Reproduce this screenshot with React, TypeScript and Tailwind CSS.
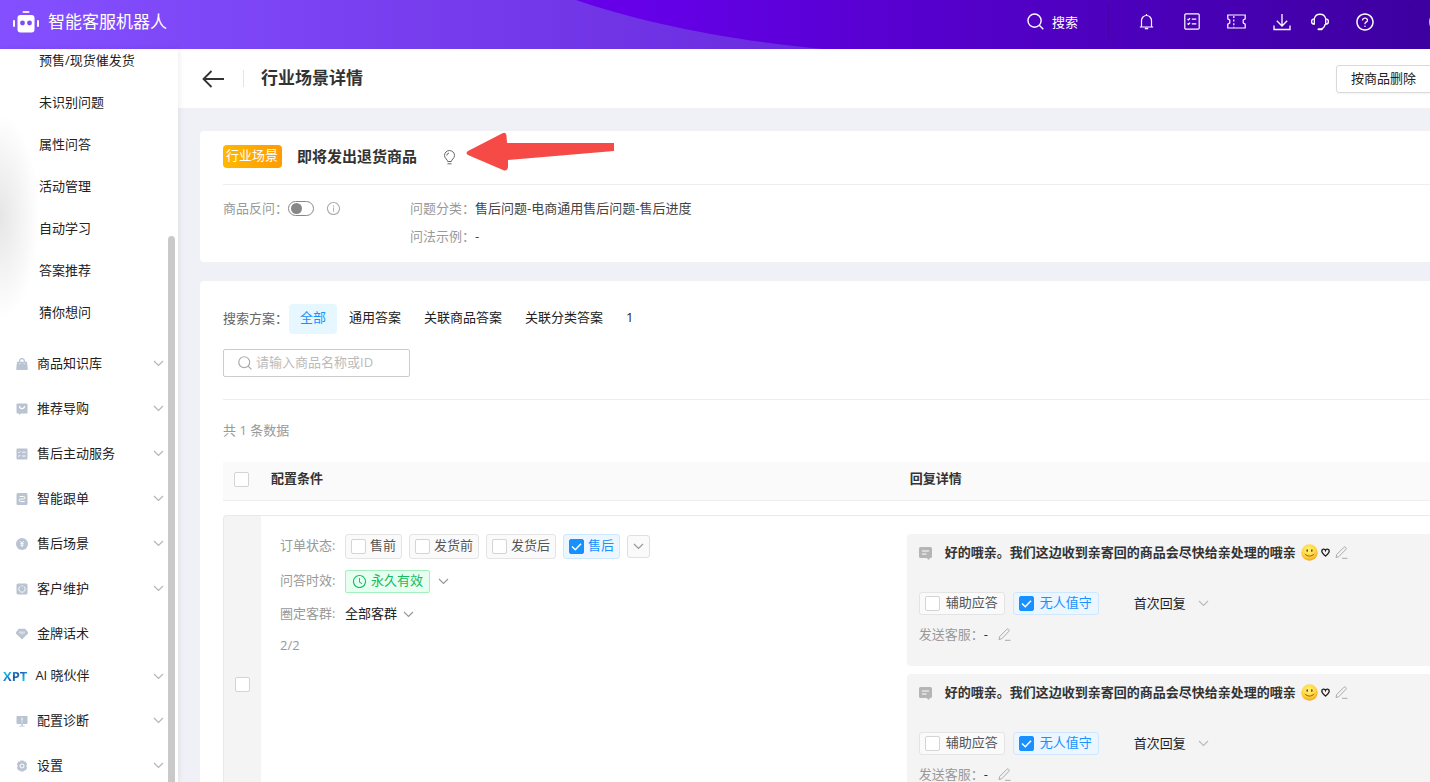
import { useState } from 'react';
import type { ReactNode } from 'react';
import clsx from 'clsx';
import {
  AiOutlineClockCircle,
  AiOutlineInfoCircle,
  AiOutlineQuestionCircle,
} from 'react-icons/ai';

const subMenu = [
  '预售/现货催发货',
  '未识别问题',
  '属性问答',
  '活动管理',
  '自动学习',
  '答案推荐',
  '猜你想问',
];

const tabs = ['全部', '通用答案', '关联商品答案', '关联分类答案', '1'];

function Down({ className = 'text-[#999]' }: { className?: string }) {
  return (
    <svg width="11" height="7" viewBox="0 0 11 7" fill="none" stroke="currentColor" strokeWidth="1.2" className={className}>
      <path d="M1 1l4.5 4.5L10 1" />
    </svg>
  );
}

function Search({ size, className }: { size: number; className?: string }) {
  return (
    <svg width={size} height={size} viewBox="0 0 18 18" fill="none" stroke="currentColor" strokeWidth="1.5" className={className}>
      <circle cx="8" cy="8" r="7" />
      <path d="M13 13l4.300 4.300" />
    </svg>
  );
}

function Pencil() {
  return (
    <svg width="13" height="13" viewBox="0 0 13 13" fill="none" stroke="currentColor" strokeWidth="1">
      <path d="M1 11.500l.7-3L9 1.200a1 1 0 0 1 1.400 0l.6.6a1 1 0 0 1 0 1.400L3.800 10.700zM7 12.300h5.500" />
    </svg>
  );
}

function MenuIcon({ children }: { children: ReactNode }) {
  return (
    <svg width="12" height="12" viewBox="0 0 12 12" fill="#b9c3d2" stroke="none" className="shrink-0">
      {children}
    </svg>
  );
}

const menu = [
  {
    label: '商品知识库',
    open: true,
    icon: (
      <MenuIcon>
        <path d="M3.6 4V3a2.4 2.4 0 0 1 4.8 0v1" fill="none" stroke="#b9c3d2" strokeWidth="1.3" />
        <path d="M1 3.8h10l.8 7.2a1 1 0 0 1-1 1H1.200a1 1 0 0 1-1-1z" />
        <path d="M3.8 5v1.200M8.200 5v1.200" stroke="#fff" strokeWidth=".9" />
      </MenuIcon>
    ),
  },
  {
    label: '推荐导购',
    open: true,
    icon: (
      <MenuIcon>
        <path d="M1.500 .5h9a1 1 0 0 1 1 1v8a1 1 0 0 1-1 1H5L3 12v-1.500H1.500a1 1 0 0 1-1-1v-8a1 1 0 0 1 1-1z" />
        <path d="M3.500 3c0 3.400 5 3.400 5 0" fill="none" stroke="#fff" strokeWidth="1.200" />
      </MenuIcon>
    ),
  },
  {
    label: '售后主动服务',
    open: true,
    icon: (
      <MenuIcon>
        <rect x=".5" y=".5" width="11" height="11" rx="1" />
        <path d="M2.200 4.200l.8.7 1.300-1.500M2.200 7.800l.8.7 1.300-1.500M6 4.200h3.800M6 8h3.800" fill="none" stroke="#fff" strokeWidth=".9" />
      </MenuIcon>
    ),
  },
  {
    label: '智能跟单',
    open: true,
    icon: (
      <MenuIcon>
        <rect x=".5" y="0" width="11" height="12" rx="1.500" />
        <path d="M3.500 3.500h4.200a1.200 1.200 0 0 1 0 2.500H4.500a1.200 1.200 0 0 0 0 2.600H8.800" fill="none" stroke="#fff" strokeWidth="1" />
      </MenuIcon>
    ),
  },
  {
    label: '售后场景',
    open: true,
    icon: (
      <MenuIcon>
        <circle cx="6" cy="6" r="6" />
        <path d="M4.300 3.200L6 5.300l1.700-2.100M6 5.300V9M4.400 5.600h3.200M4.400 7.200h3.200" fill="none" stroke="#fff" strokeWidth=".9" />
      </MenuIcon>
    ),
  },
  {
    label: '客户维护',
    open: true,
    icon: (
      <MenuIcon>
        <rect x=".5" y=".5" width="11" height="11" rx="1.500" />
        <path d="M4.300 3.300a3.200 3.200 0 1 0 3.400 0M6 2.300v1.400" fill="none" stroke="#fff" strokeWidth=".9" />
      </MenuIcon>
    ),
  },
  {
    label: '金牌话术',
    open: false,
    icon: (
      <MenuIcon>
        <path d="M2.800.8h6.400L12 4.200v1.200L6 11.600 0 5.400V4.200z" />
        <path d="M4 3.500v2M6 3.500v3M8 3.500v2" stroke="#fff" strokeWidth=".9" />
      </MenuIcon>
    ),
  },
  { label: 'AI 晓伙伴', open: true, icon: null },
  {
    label: '配置诊断',
    open: true,
    icon: (
      <MenuIcon>
        <path d="M1.300 1h9.400a.8.8 0 0 1 .8.8v6.400a.8.8 0 0 1-.8.8H1.300a.8.8 0 0 1-.8-.8V1.800a.8.8 0 0 1 .8-.8zM5.300 9h1.400v1.800H5.300zM3.300 10.700h5.400v.9H3.300z" />
        <path d="M6 2.600v3M6 6.500v1.100" stroke="#fff" strokeWidth="1" />
      </MenuIcon>
    ),
  },
  {
    label: '设置',
    open: true,
    icon: (
      <MenuIcon>
        <path d="M4.600.4h2.800l.7 1.200 1.400-.1 1.600 2.400-.6 1.300v1.600l.6 1.300-1.600 2.400-1.400-.1-.7 1.200H4.600l-.7-1.200-1.400.1L.9 8.100l.6-1.300V5.200L.9 3.900l1.600-2.400 1.400.1z" />
        <circle cx="6" cy="6" r="2" fill="none" stroke="#fff" strokeWidth="1" />
      </MenuIcon>
    ),
  },
];

function Check({ checked = false, label }: { checked?: boolean; label?: string }) {
  const [on, setOn] = useState(checked);
  return (
    <span className="grid size-[15px] shrink-0">
      <input
        type="checkbox"
        aria-label={label}
        checked={on}
        onChange={() => setOn(!on)}
        className="col-start-1 row-start-1 size-[15px] appearance-none rounded-[2px] border border-[#d4d4d4] bg-white checked:border-[#1890ff] checked:bg-[#1890ff]"
      />
      {on && (
        <svg viewBox="0 0 15 15" fill="none" stroke="#fff" strokeWidth="1.500" className="pointer-events-none col-start-1 row-start-1 size-[15px]">
          <path d="M3 7.500l3.300 3.300L12 4.800" />
        </svg>
      )}
    </span>
  );
}

function CheckChip({ text, checked = false, className }: { text: string; checked?: boolean; className: string }) {
  return (
    <label
      className={clsx(
        'flex items-center rounded-[3px] border',
        checked ? 'border-[#cfe8ff] bg-[#ebf6ff] text-[#1890ff]' : 'border-[#e4e4e4] bg-[#fafafa] text-[#555]',
        className,
      )}
    >
      <Check checked={checked} />
      <span className="pb-[3px]">{text}</span>
    </label>
  );
}

function Smile() {
  return (
    <svg width="17" height="17" viewBox="0 0 17 17">
      <defs>
        <radialGradient id="face" cx=".45" cy=".35" r=".7">
          <stop offset="0" stopColor="#fff27a" />
          <stop offset=".6" stopColor="#ffd53d" />
          <stop offset="1" stopColor="#f39a1c" />
        </radialGradient>
      </defs>
      <circle cx="8.500" cy="8.500" r="8.200" fill="url(#face)" />
      <ellipse cx="6.200" cy="6.600" rx=".8" ry="1.400" fill="#6b4310" />
      <ellipse cx="10.800" cy="6.600" rx=".8" ry="1.400" fill="#6b4310" />
      <path d="M4.200 10.200c1.800 2.600 6.800 2.600 8.600 0" fill="none" stroke="#8a4b10" strokeWidth=".9" strokeLinecap="round" />
    </svg>
  );
}

function ReplyCard() {
  return (
    <div className="h-[132px] rounded-l bg-[#f4f4f4] pt-2 pl-3">
      <div className="flex h-5 items-center">
        <svg width="13" height="13" viewBox="0 0 13 13" fill="#b5b5b5" className="mt-0.5">
          <path d="M1.500 0h10A1.500 1.500 0 0 1 13 1.500v8a1.500 1.500 0 0 1-1.500 1.500h-.7L10 13l-2.500-2h-6A1.500 1.500 0 0 1 0 9.500v-8A1.500 1.500 0 0 1 1.500 0z" />
          <path d="M3 4h7M3 7h4.500" stroke="#fff" strokeWidth="1.200" />
        </svg>
        <span className="ml-[13px] font-bold text-[#333]">
          好的哦亲。我们这边收到亲寄回的商品会尽快给亲处理的哦亲
        </span>
        <span className="ml-[5px] flex items-center gap-[3px]">
          <Smile />
          <svg width="9" height="9" viewBox="0 0 9 9" fill="none" stroke="#222" strokeWidth="1.400">
            <path d="M4.500 8C2 6 .8 4.600.8 3a1.900 1.900 0 0 1 3.700-.6A1.900 1.900 0 0 1 8.200 3c0 1.600-1.200 3-3.700 5z" />
          </svg>
        </span>
        <button aria-label="编辑回复" className="ml-[5px] text-[#aaa]">
          <Pencil />
        </button>
      </div>
      <div className="mt-[30px] flex items-center">
        <CheckChip text="辅助应答" className="h-[23px] gap-1.5 pr-1.5 pl-[5px]" />
        <CheckChip text="无人值守" checked className="ml-2 h-[23px] gap-1.5 pr-1.5 pl-[5px]" />
        <button className="ml-[35px] flex items-center gap-3 text-[#222]">
          <span className="pb-0.5">首次回复</span>
          <Down className="text-[#bbb]" />
        </button>
      </div>
      <div className="mt-[9px] flex h-5 items-center text-[#999]">
        发送客服：
        <span className="text-[#333]">-</span>
        <button aria-label="编辑客服" className="ml-2.5 text-[#aaa]">
          <Pencil />
        </button>
      </div>
    </div>
  );
}

function TopBar() {
  return (
    <header className="relative flex h-[49px] shrink-0 items-center overflow-hidden bg-linear-to-r from-[#6500e8] from-45% to-[#3d00a0] text-white">
      <svg width="824" height="49" viewBox="0 0 824 49" className="absolute top-0 left-0">
        <defs>
          <linearGradient id="sweep" x1="0" x2="1">
            <stop offset="0" stopColor="#8450ff" />
            <stop offset="1" stopColor="#6a2bdd" />
          </linearGradient>
        </defs>
        <path d="M0 0H576C640 22 725 40 823 49H0z" fill="url(#sweep)" />
      </svg>
      <div className="relative flex items-center pb-1.5 pl-[13px]">
        <svg width="26" height="22" viewBox="0 0 26 22" fill="#fff">
          <rect x="9.500" y="0" width="7" height="2" rx="1" opacity=".85" />
          <rect x="4.500" y="4" width="17" height="17.500" rx="3" />
          <rect x="0" y="9" width="2" height="7" rx="1" />
          <rect x="24" y="9" width="2" height="7" rx="1" />
          <circle cx="9.500" cy="12" r="2.400" fill="#7f4bf8" />
          <circle cx="16.500" cy="12" r="2.400" fill="#7f4bf8" />
        </svg>
        <h1 className="ml-[9px] text-[17px] leading-6">智能客服机器人</h1>
      </div>
      <nav className="relative ml-auto flex h-full items-center pb-1.5">
        <button className="mr-[30px] flex items-center gap-2">
          <Search size={17} />
          搜索
        </button>
        <span className="h-9 w-px bg-black/10" />
        <button aria-label="通知" className="ml-[15px] flex w-[45px] justify-center">
          <svg width="15" height="17" viewBox="0 0 15 17" fill="none" stroke="#fff" strokeWidth="1.200">
            <path d="M.8 14h13.400M2.500 14V7.500a5 5 0 0 1 10 0V14M7.500 1v1.500" />
            <path d="M5.800 15.500h3.400" strokeWidth="1.600" />
          </svg>
        </button>
        <button aria-label="任务" className="flex w-[45px] justify-center">
          <svg width="16" height="17" viewBox="0 0 16 17" fill="none" stroke="#fff" strokeWidth="1.200">
            <rect x=".8" y=".8" width="14.400" height="15.400" rx="1.200" />
            <path d="M3.500 6l1 .9 1.600-1.800M3.500 10.500l1 .9 1.600-1.800M7.800 6.200h4.500M7.800 10.800h4.500" />
          </svg>
        </button>
        <button aria-label="卡券" className="flex w-[45px] justify-center">
          <svg width="19" height="15" viewBox="0 0 19 15" fill="none" stroke="#fff" strokeWidth="1.200">
            <path d="M.8 1h17.400v3.800l-2 1.200v3l2 1.200V14H.8v-3.800L2.800 9V6l-2-1.200z" />
            <path d="M6.800 2v11.500" strokeDasharray="2 1.600" />
          </svg>
        </button>
        <button aria-label="下载" className="flex w-[45px] justify-center">
          <svg width="18" height="18" viewBox="0 0 18 18" fill="none" stroke="#fff" strokeWidth="1.300">
            <path d="M9 1v12M3.800 7.800L9 13l5.200-5.200M1 12.500v4h16v-4" />
          </svg>
        </button>
        <button aria-label="客服" className="flex w-[31px] justify-center">
          <svg width="18" height="18" viewBox="0 0 18 18" fill="none" stroke="#fff" strokeWidth="1.300">
            <path d="M3.300 6a5.800 5.800 0 0 1 11.400 0M3.300 5.800v5.400a2.700 2.700 0 0 1 0-5.400zM14.700 5.800v5.400a2.700 2.700 0 0 0 0-5.400zM14.200 11.200c-.4 2.400-1.700 4-3.700 4.600" />
            <path d="M7.500 16.200h3.200" strokeWidth="2" strokeLinecap="round" />
          </svg>
        </button>
        <button aria-label="帮助" className="flex w-[59px] justify-center">
          <AiOutlineQuestionCircle size={20} />
        </button>
        <span className="ml-[15px] h-9 w-px bg-black/10" />
        <span className="-mr-[19px] ml-[19px] size-5 shrink-0 rounded-full bg-white/70" />
      </nav>
    </header>
  );
}

function Sidebar() {
  return (
    <aside className="relative z-10 w-[178px] shrink-0 overflow-hidden bg-white text-[#222] shadow-[1px_0_6px_rgba(0,0,0,0.08)]">
      <div className="absolute top-16 -left-10 h-52 w-20 bg-radial from-black/10 to-transparent to-70%" />
      <ul className="relative -mt-2.5">
        {subMenu.map((text) => (
          <li key={text}>
            <a href="#" className="flex h-[42px] items-center pl-[39px]">
              {text}
            </a>
          </li>
        ))}
      </ul>
      <ul className="relative mt-2">
        {menu.map((item) => (
          <li key={item.label}>
            <a
              href="#"
              className={clsx('flex items-center pr-3.5', item.icon ? 'h-[45px] gap-[9px] pl-4' : 'mb-0.5 h-10 gap-2 pl-[3px]')}
            >
              {item.icon ?? (
                <b className="bg-linear-to-br from-[#14b4e6] from-30% via-[#1f4fa8] via-50% to-[#14b4e6] to-75% bg-clip-text text-[13px] text-transparent">
                  XPT
                </b>
              )}
              <span className="pb-0.5">{item.label}</span>
              {item.open && (
                <span className="ml-auto">
                  <Down className="text-[#b5b5b5]" />
                </span>
              )}
            </a>
          </li>
        ))}
      </ul>
      <div className="absolute top-[187px] right-[3px] bottom-0 w-[7px] rounded-t-full bg-[#c9c9c9]" />
    </aside>
  );
}

function SceneCard() {
  return (
    <section className="rounded-l bg-white pt-3.5 pb-3 pl-[23px]">
      <div className="flex items-center border-b border-[#eee] pb-4">
        <span className="h-[23px] rounded-sm bg-linear-to-r from-[#ffb800] to-[#ff9c00] pr-1 pl-[3px] leading-[21px] text-white">
          行业场景
        </span>
        <h3 className="ml-[15px] text-[15px] leading-[23px] font-bold text-[#333]">即将发出退货商品</h3>
        <div className="relative ml-[26px]">
          <svg width="13" height="15" viewBox="0 0 13 15" fill="none" stroke="#666" strokeWidth="1" className="mt-px">
            <path d="M4.700 11.500c0-1.800-3.200-3-3.200-6a5 5 0 0 1 10 0c0 3-3.200 4.200-3.200 6zM4.500 13.800h4M3.800 5.500a2.700 2.700 0 0 1 2.200-2.500" />
          </svg>
          <svg width="150" height="42" viewBox="0 0 150 42" className="absolute -top-5 left-[22px]">
            <path
              d="M3 22L37 4.500Q41 2.500 41.500 6.500L42 14 149 14v8L43 31v7Q42 43 38 41L3 26Q0 24 3 22z"
              fill="#f54a45"
            />
          </svg>
        </div>
      </div>
      <div className="grid grid-cols-[187px_1fr] pt-[9px] leading-7 text-[#999]">
        <div className="flex items-center">
          <label htmlFor="ask">商品反问：</label>
          <input
            id="ask"
            type="checkbox"
            role="switch"
            className="relative h-[15px] w-[26px] appearance-none rounded-full border border-[#888] before:absolute before:top-px before:left-0.5 before:size-[11px] before:rounded-full before:bg-[#888] checked:before:left-[11px]"
          />
          <AiOutlineInfoCircle size={15} className="ml-3 text-[#aaa]" />
        </div>
        <div>
          问题分类：<span className="text-[#444]">售后问题-电商通用售后问题-售后进度</span>
        </div>
        <div className="col-start-2">
          问法示例：<span className="text-[#444]">-</span>
        </div>
      </div>
    </section>
  );
}

function AnswerTable() {
  return (
    <table className="mt-[22px] w-full table-fixed border-separate border-spacing-0 text-left">
      <colgroup>
        <col className="w-[38px]" />
        <col className="w-[53%]" />
        <col />
      </colgroup>
      <thead className="bg-[#fafafa] text-[#333]">
        <tr className="h-[39px]">
          <th className="border-b border-[#eee] pb-1 pl-[11px]">
            <Check label="全选" />
          </th>
          <th className="border-b border-[#eee] pb-1.5 pl-2.5">配置条件</th>
          <th className="border-b border-[#eee] pb-1.5 pl-[9px]">回复详情</th>
        </tr>
      </thead>
      <tbody className="before:block before:h-3.5 before:content-['']">
        <tr>
          <td className="rounded-tl border-t border-l border-[#e9e9e9] bg-[#f4f4f4] pb-0.5 pl-[11px]">
            <Check label="选择此条" />
          </td>
          <td className="border-t border-[#e9e9e9] pt-[18px] pl-[19px] align-top text-[#999]">
            <div className="flex flex-col gap-[11px]">
              <div className="flex items-center">
                <span className="w-[65px] pb-[3px]">订单状态:</span>
                <div className="flex items-center gap-[7px]">
                  <CheckChip text="售前" className="h-[25px] gap-1 px-[5px]" />
                  <CheckChip text="发货前" className="h-[25px] gap-1 px-[5px]" />
                  <CheckChip text="发货后" className="h-[25px] gap-1 px-[5px]" />
                  <CheckChip text="售后" checked className="h-[25px] gap-1 px-[5px]" />
                  <button aria-label="更多状态" className="grid size-[23px] place-items-center rounded-[3px] border border-[#e0e0e0] bg-[#fafafa]">
                    <Down />
                  </button>
                </div>
              </div>
              <div className="flex items-center">
                <span className="w-[65px] pb-[3px]">问答时效:</span>
                <span className="flex h-[23px] items-center gap-1 rounded-[2px] border border-[#a3efc0] bg-[#e6fff0] px-1.5 text-[#12bc60]">
                  <AiOutlineClockCircle size={15} />
                  <span className="pb-[3px]">永久有效</span>
                </span>
                <button aria-label="修改时效" className="ml-2">
                  <Down />
                </button>
              </div>
              <div className="flex h-5 items-center">
                <span className="w-[65px] pb-0.5">圈定客群:</span>
                <button className="flex items-center gap-1.5 text-[#222]">
                  <span className="pb-0.5">全部客群</span>
                  <Down />
                </button>
              </div>
              <div className="h-5 leading-5">2/2</div>
            </div>
          </td>
          <td className="border-t border-[#e9e9e9] pt-[18px] pb-12 pl-1.5">
            <div className="flex flex-col gap-2">
              <ReplyCard />
              <ReplyCard />
            </div>
          </td>
        </tr>
      </tbody>
    </table>
  );
}

function Answers() {
  const [tab, setTab] = useState('全部');

  return (
    <section className="mt-[19px] rounded-l bg-white pt-[23px] pl-[23px]">
      <div className="flex items-center gap-px text-[#222]">
        <span className="pb-0.5 text-[#666]">搜索方案：</span>
        {tabs.map((t) => (
          <button
            key={t}
            onClick={() => setTab(t)}
            className={clsx('h-[30px] rounded px-[11px] pb-1', t === tab && 'bg-[#e6f7ff] text-[#1890ff]')}
          >
            {t}
          </button>
        ))}
      </div>
      <div className="mt-[15px] flex h-7 w-[187px] items-center gap-1 rounded-[2px] border border-[#ccc] px-3.5">
        <Search size={14} className="shrink-0 text-[#aaa]" />
        <input
          aria-label="商品名称或ID"
          placeholder="请输入商品名称或ID"
          className="w-full min-w-0 pb-[3px] outline-none placeholder:text-[#bbb]"
        />
      </div>
      <div className="mt-[22px] border-t border-[#eee] pt-5 leading-5 text-[#999]">共 1 条数据</div>
      <AnswerTable />
    </section>
  );
}

export default function App() {
  return (
    <div
      lang="zh-CN"
      className="flex h-screen flex-col overflow-hidden bg-[#f0f1f6] font-['Open_Sans','Noto_Sans_CJK_SC',sans-serif] text-[13px] leading-5"
    >
      <TopBar />
      <div className="flex min-h-0 flex-1">
        <Sidebar />
        <main className="min-w-0 flex-1 overflow-hidden">
          <div className="flex h-[59px] items-center bg-white pl-6">
            <button aria-label="返回">
              <svg width="22" height="18" viewBox="0 0 22 18" fill="none" stroke="#333" strokeWidth="1.800">
                <path d="M9.500 1L1.500 9l8 8M1.500 9H22" />
              </svg>
            </button>
            <span className="ml-[19px] h-[17px] w-px bg-[#e4e4e4]" />
            <h2 className="ml-[17px] pb-0.5 text-[17px] leading-6 font-bold text-[#333]">行业场景详情</h2>
            <button className="-mr-[15px] ml-auto h-7 rounded-[3px] border border-[#d9d9d9] pr-7 pb-0.5 pl-3.5 text-[#222] shadow-xs">
              按商品删除
            </button>
          </div>
          <div className="pt-[23px] pl-[22px]">
            <SceneCard />
            <Answers />
          </div>
        </main>
      </div>
    </div>
  );
}
